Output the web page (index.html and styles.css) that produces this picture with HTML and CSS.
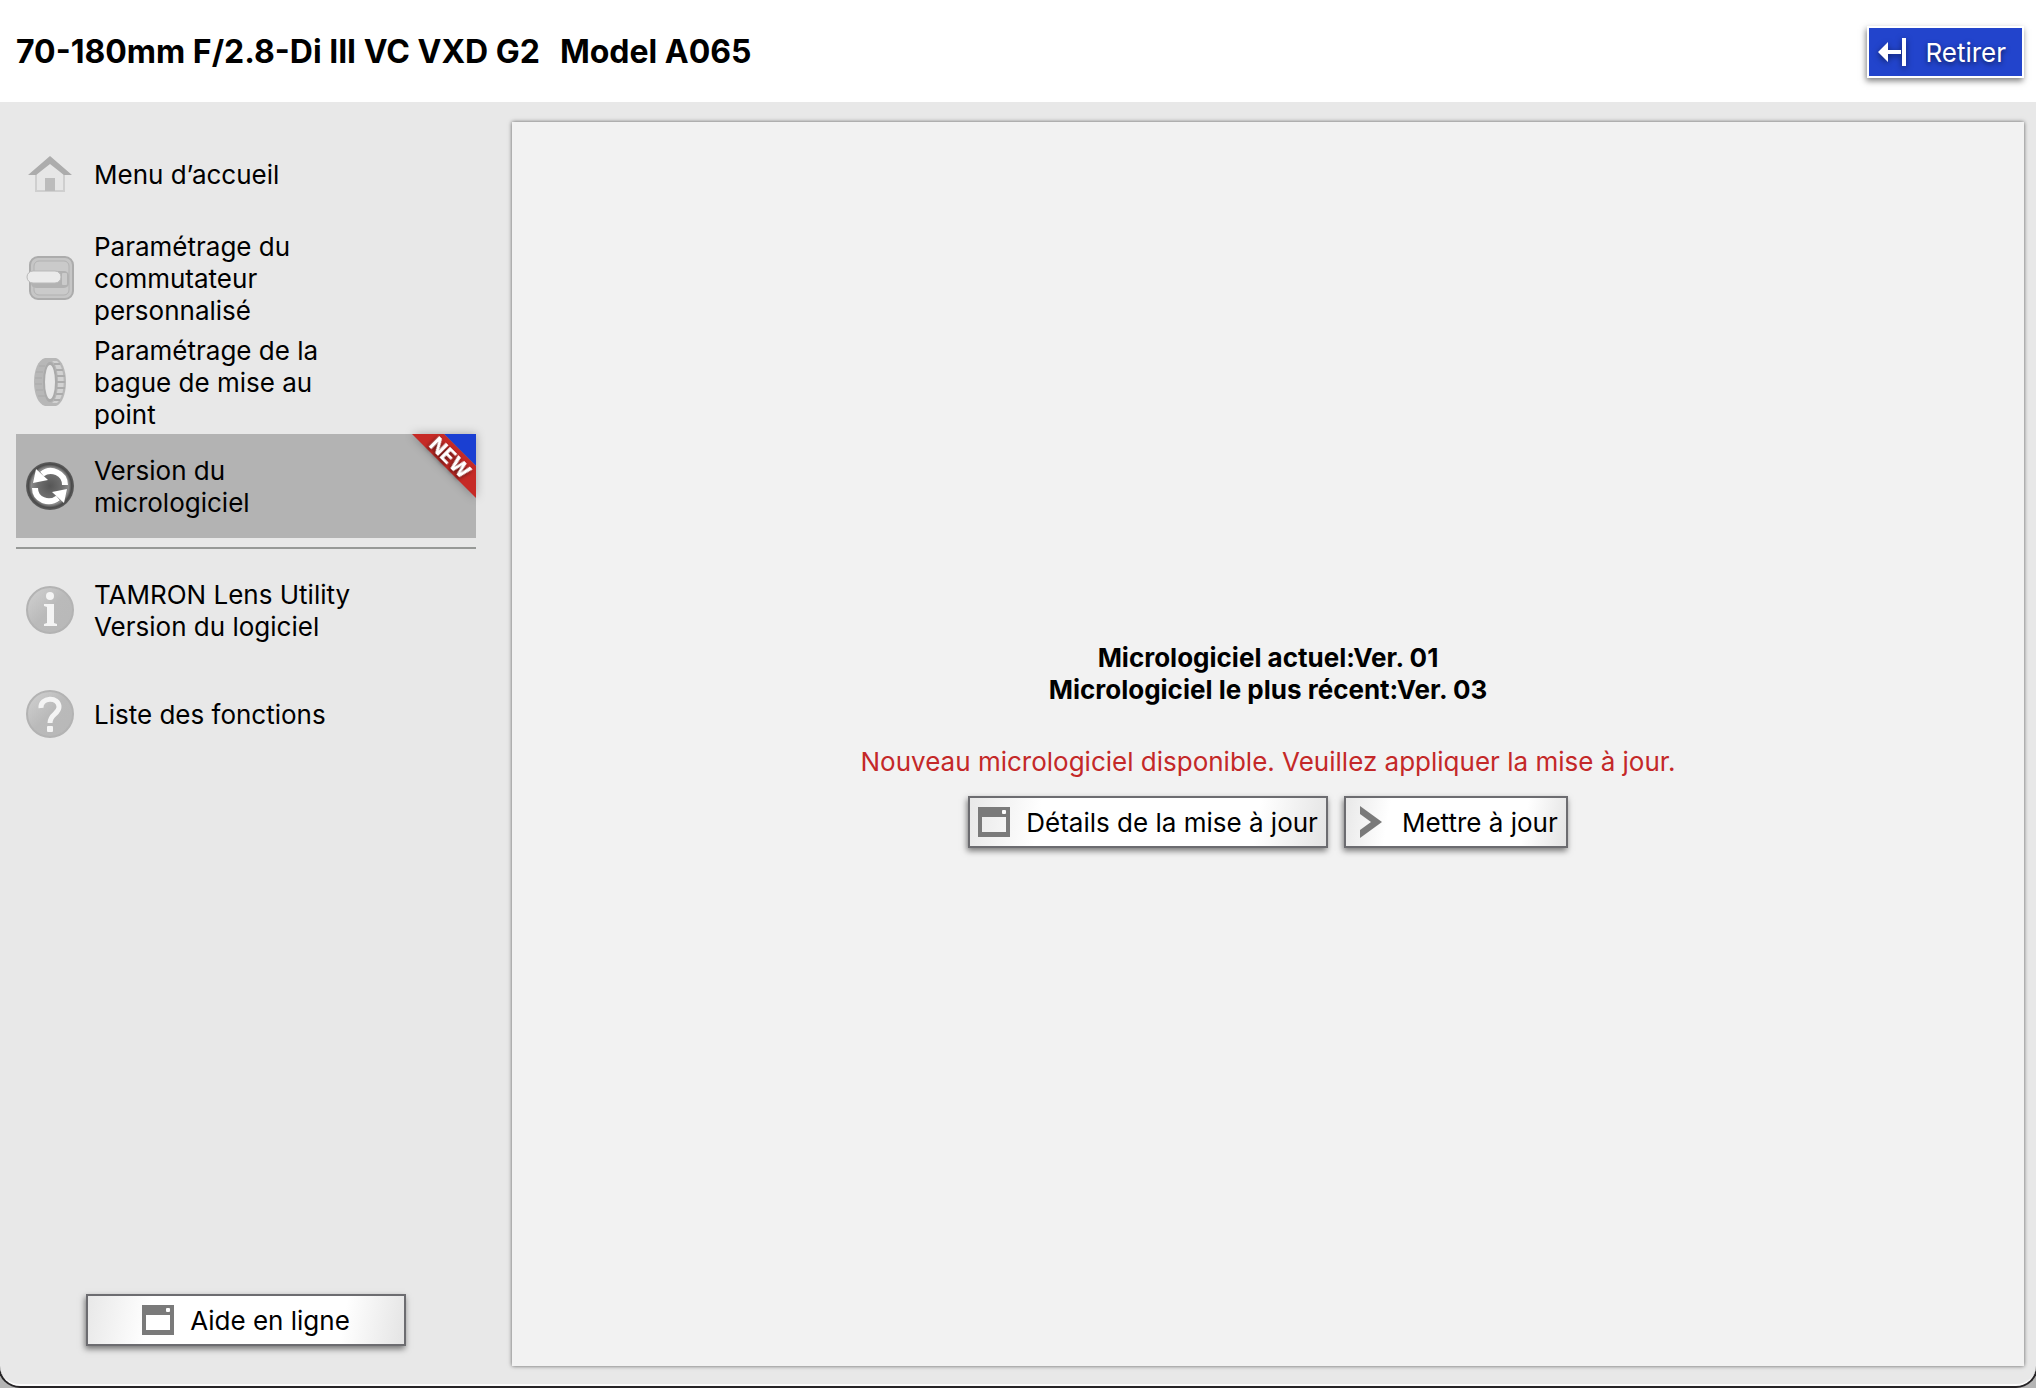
FILE: index.html
```html
<!DOCTYPE html>
<html lang="fr">
<head>
  <meta charset="UTF-8" />
  <title>TAMRON Lens Utility</title>
  <link rel="stylesheet" href="styles.css">
</head>
<body>
  <div class="window">
    <header class="header">
      <h1><span>70-180mm F/2.8-Di III VC VXD G2</span><span>Model A065</span></h1>
      <button type="button" class="btn btn-blue">
        <svg class="btn-icon" viewBox="0 0 32 32" width="32" height="32">
          <path d="M1 16L11 6V14H24V18H11V26Z" fill="#fff"/>
          <rect x="25" y="2" width="4" height="28" fill="#fff"/>
        </svg>
        <span>Retirer</span>
      </button>
    </header>

    <div class="content">
      <nav class="sidebar">
        <a href="#" class="item">
          <svg viewBox="0 0 48 48" width="48" height="48">
            <path d="M10 24L24 10L38 24V41H10Z" fill="#e6e6e6" stroke="#cfcfcf" stroke-width="2"/>
            <rect x="19" y="28" width="10" height="13" fill="#bcbcbc"/>
            <path d="M24 6L46 25H38L24 14L10 25H2Z" fill="#acacac"/>
          </svg>
          <span>Menu d’accueil</span>
        </a>
        <a href="#" class="item">
          <svg viewBox="0 0 48 48" width="48" height="48">
            <rect x="4" y="3" width="43" height="42" rx="8" fill="#c6c6c6" stroke="#acacac" stroke-width="2"/>
            <rect x="8" y="7" width="35" height="34" rx="5" fill="#cacaca" stroke="#b2b2b2"/>
            <rect x="5" y="17" width="38" height="17" rx="5" fill="#b2b2b2"/>
            <rect x="36" y="19" width="5" height="12" rx="1" fill="#cbcbcb"/>
            <rect x="1" y="17" width="34" height="12" rx="6" fill="#ebebeb" stroke="#b9b9b9"/>
          </svg>
          <span>Paramétrage du<br>commutateur<br>personnalisé</span>
        </a>
        <a href="#" class="item">
          <svg viewBox="0 0 48 48" width="48" height="48">
            <path d="M19 0H30C36 2 40 12 40 24S36 46 30 48H19C12 46 8 36 8 24S12 2 19 0Z" fill="#b7b7b7"/>
            <path d="M26 3C34 8 34 40 26 45L31 45C40 38 40 10 31 3Z" fill="#d2d2d2"/>
            <path d="M28 6H34M30 12H37M31 18H39M31 24H39M31 30H39M30 36H37M28 42H34" stroke="#acacac" stroke-width="2"/>
            <path d="M10 14H17M9 20H16M9 26H16M10 32H17M12 38H19M13 8H19" stroke="#a9a9a9"/>
            <ellipse cx="24" cy="24" rx="7" ry="20" fill="#aaa"/>
            <ellipse cx="24" cy="24" rx="5" ry="17" fill="#e8e8e8"/>
          </svg>
          <span>Paramétrage de la<br>bague de mise au<br>point</span>
        </a>
        <a href="#" class="item active">
          <svg viewBox="0 0 48 48" width="48" height="48">
            <defs>
              <radialGradient id="dark" cx="50%" cy="50%" r="50%">
                <stop offset="0" stop-color="#565656"/>
                <stop offset="0.5" stop-color="#6e6e6e"/>
                <stop offset="0.78" stop-color="#8a8a8a"/>
                <stop offset="0.9" stop-color="#4a4a4a"/>
                <stop offset="1" stop-color="#5e5e5e"/>
              </radialGradient>
            </defs>
            <circle cx="24" cy="24" r="24" fill="url(#dark)"/>
            <path d="M16 12C25 5 39 11 39 23" fill="none" stroke="#fff" stroke-width="6"/>
            <path d="M10 7L7 21L22 18Z" fill="#fff"/>
            <path d="M32 36C23 43 9 38 9 26" fill="none" stroke="#fff" stroke-width="6"/>
            <path d="M38 41L41 27L26 30Z" fill="#fff"/>
          </svg>
          <span>Version du<br>micrologiciel</span>
          <svg class="ribbon" viewBox="0 0 64 64" width="64" height="64">
            <path d="M32 0H64V32Z" fill="#1a3fd2"/>
            <path d="M0 0H32L64 32V64Z" fill="#c62a26"/>
            <text x="38" y="24" transform="rotate(45 38 24)" text-anchor="middle" dominant-baseline="central">NEW</text>
          </svg>
        </a>
        <hr>
        <a href="#" class="item">
          <svg viewBox="0 0 48 48" width="48" height="48">
            <defs>
              <linearGradient id="light" x1="0" y1="0" x2="1" y2="1">
                <stop offset="0.1" stop-color="#cdcdcd"/>
                <stop offset="0.5" stop-color="#bababa"/>
                <stop offset="1" stop-color="#b8b8b8"/>
              </linearGradient>
            </defs>
            <circle cx="24" cy="24" r="23" fill="url(#light)" stroke="#b3b3b3" stroke-width="2"/>
            <circle cx="24" cy="10" r="4" fill="#f4f4f4"/>
            <path d="M18 18H28V37L31 38V40H18V38L21 37V21L18 20Z" fill="#f4f4f4"/>
          </svg>
          <span>TAMRON Lens Utility<br>Version du logiciel</span>
        </a>
        <a href="#" class="item">
          <svg viewBox="0 0 48 48" width="48" height="48">
            <circle cx="24" cy="24" r="23" fill="url(#light)" stroke="#b3b3b3" stroke-width="2"/>
            <path d="M15 18C14 7 33 6 33 17C33 24 24 24 24 33" fill="none" stroke="#f4f4f4" stroke-width="5"/>
            <rect x="21" y="36" width="6" height="6" rx="1" fill="#f4f4f4"/>
          </svg>
          <span>Liste des fonctions</span>
        </a>
        <button type="button" class="btn btn-help">
          <svg class="btn-icon" viewBox="0 0 32 32" width="32" height="32">
            <path d="M0 1H32V31H0ZM4 11V26H28V11Z" fill="#7a7a7a" fill-rule="evenodd"/>
            <rect x="24" y="4" width="4" height="4" rx="1" fill="#fff"/>
          </svg>
          <span>Aide en ligne</span>
        </button>
      </nav>

      <main class="panel">
        <div class="versions">
          <p>Micrologiciel actuel:Ver. 01</p>
          <p>Micrologiciel le plus récent:Ver. 03</p>
        </div>
        <p class="notice">Nouveau micrologiciel disponible. Veuillez appliquer la mise à jour.</p>
        <div class="actions">
          <button type="button" class="btn">
            <svg class="btn-icon" viewBox="0 0 32 32" width="32" height="32">
              <path d="M0 1H32V31H0ZM4 11V26H28V11Z" fill="#7a7a7a" fill-rule="evenodd"/>
              <rect x="24" y="4" width="4" height="4" rx="1" fill="#fff"/>
            </svg>
            <span>Détails de la mise à jour</span>
          </button>
          <button type="button" class="btn">
            <svg class="btn-icon" viewBox="0 0 32 32" width="32" height="32">
              <path d="M6 0L28 16L6 32V24L17 16L6 8Z" fill="#7a7a7a"/>
            </svg>
            <span>Mettre à jour</span>
          </button>
        </div>
      </main>
    </div>
  </div>
</body>
</html>
```

FILE: styles.css
```css
* {
  box-sizing: border-box;
}
body {
  margin: 0;
  height: 100vh;
  padding-bottom: 2px;
  overflow: hidden;
  background: #b4b4b4;
  color: #000;
  font-family: Inter, "Liberation Sans", sans-serif;
  font-size: 26px;
  line-height: 32px;
}
p {
  margin: 0;
}
.window {
  display: flex;
  flex-direction: column;
  height: 100%;
  background: #e8e8e8;
  border-bottom: 2px solid #fbfbfb;
  border-radius: 0 0 20px 20px;
  box-shadow: 0 0 0 2px #262426;
  overflow: hidden;
}
.header {
  display: flex;
  align-items: center;
  justify-content: space-between;
  padding: 26px 12px 24px 16px;
  background: #fff;
}
.header h1 {
  display: flex;
  gap: 20px;
  margin: 0;
  font-size: 32px;
  font-weight: 700;
}
.content {
  display: flex;
  flex: 1;
  min-height: 0;
  gap: 36px;
  padding: 20px 12px 18px 16px;
}
.sidebar {
  display: flex;
  flex-direction: column;
  width: 460px;
}
.item {
  position: relative;
  display: flex;
  align-items: center;
  gap: 20px;
  height: 104px;
  padding-left: 10px;
  color: #000;
  text-decoration: none;
}
.item span, .btn span {
  padding-top: 2px;
}
.active {
  background: #b3b3b3;
}
.ribbon {
  position: absolute;
  top: 0;
  right: 0;
  overflow: visible;
  filter: drop-shadow(0 0 5px rgba(0, 0, 0, 0.3));
}
.ribbon text {
  fill: #fff;
  font-size: 20px;
  font-weight: 800;
  filter: drop-shadow(0 2px 2px rgba(0, 0, 0, 0.6));
}
.sidebar hr {
  width: 100%;
  height: 2px;
  margin: 9px 0;
  border: 0;
  background: #979997;
}
.btn {
  display: flex;
  align-items: center;
  justify-content: center;
  gap: 16px;
  height: 52px;
  padding: 0 8px;
  border: 2px solid #6c6c70;
  background: linear-gradient(100deg, #e8e8e8, #fff 20%, #fff 80%, #e4e4e4);
  box-shadow: -1px 3px 6px rgba(0, 0, 0, 0.5);
  color: #000;
  font: inherit;
  white-space: nowrap;
  cursor: pointer;
}
.btn-icon {
  flex: none;
}
.btn-blue {
  padding: 0 16px 0 8px;
  border-color: #fff;
  background: #2244cc;
  color: #fff;
  text-shadow: 0 2px 5px rgba(0, 0, 0, 0.6);
}
.btn-blue .btn-icon {
  filter: drop-shadow(0 2px 3px rgba(0, 0, 0, 0.5));
}
.btn-help {
  align-self: center;
  width: 320px;
  margin-top: auto;
  margin-bottom: 20px;
}
.panel {
  display: flex;
  flex: 1;
  flex-direction: column;
  align-items: center;
  justify-content: center;
  background: #f2f2f2;
  box-shadow: 0 0 4px rgba(0, 0, 0, 0.6);
}
.versions {
  padding-top: 2px;
  margin-bottom: 40px;
  font-weight: 700;
  text-align: center;
}
.notice {
  margin-bottom: 18px;
  color: #c42828;
}
.actions {
  display: flex;
  gap: 16px;
}
```
